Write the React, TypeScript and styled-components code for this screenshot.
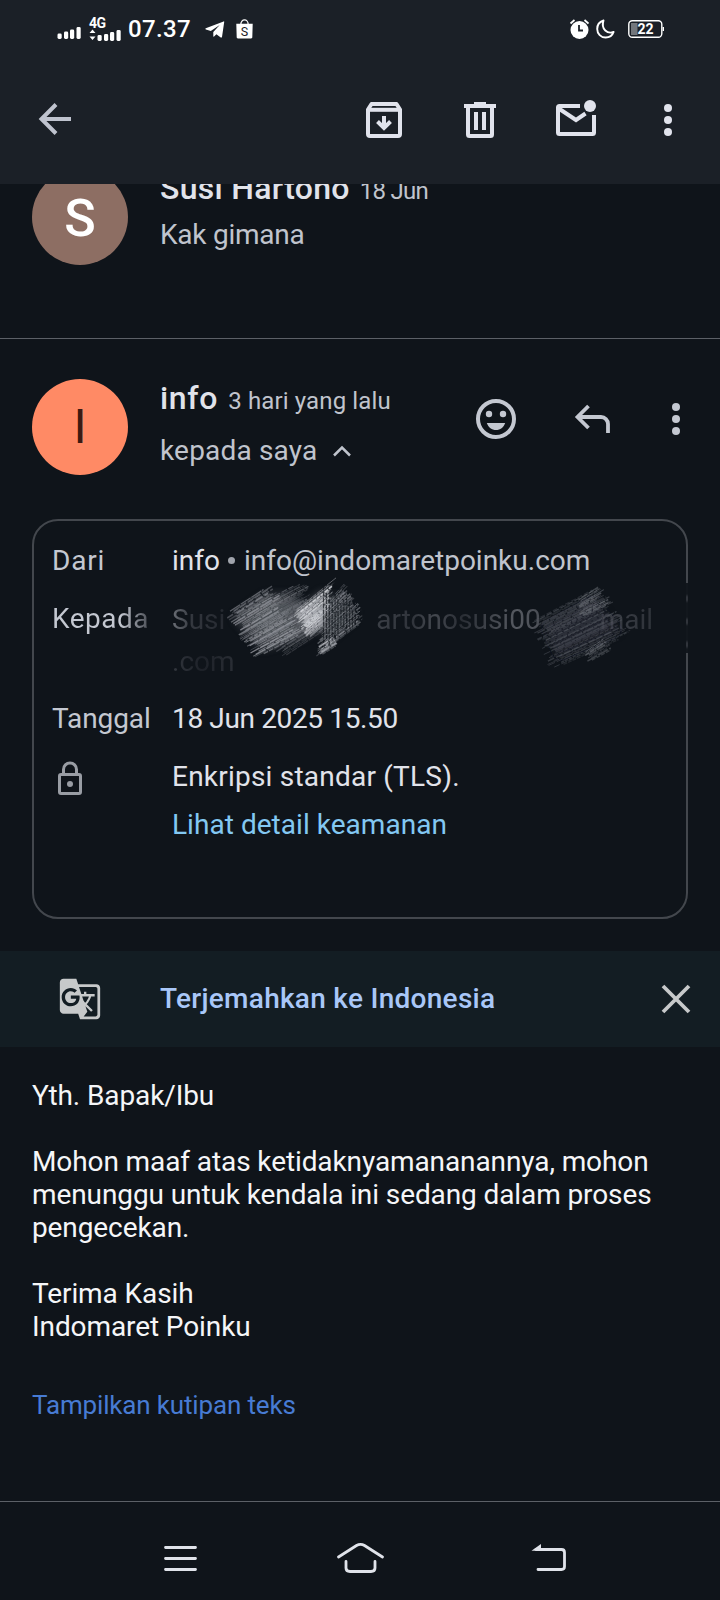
import React from 'react';
import styled, { createGlobalStyle } from 'styled-components';
import { MdGTranslate } from 'react-icons/md';

const GlobalStyle = createGlobalStyle`
  * { box-sizing: border-box; }
  body {
    margin: 0;
    background: #0f141a;
    font-family: Roboto, "Open Sans", sans-serif;
    color: #e3e5ec;
  }
  svg { display: block; flex: none; }
  button {
    border: 0;
    padding: 0;
    background: none;
    color: inherit;
    font: inherit;
  }
`;

const Screen = styled.div`
  width: 720px;
  height: 1600px;
  display: flex;
  flex-direction: column;
  overflow: hidden;
  background: #0f141a;
`;

const StatusBar = styled.div`
  height: 56px;
  flex: none;
  display: flex;
  align-items: flex-start;
  justify-content: space-between;
  padding: 17px 56px 0 57px;
  background: #1b2027;
  color: #ffffff;
`;

const StatusGroup = styled.div<{ $gap: number }>`
  display: flex;
  align-items: center;
  gap: ${(p) => p.$gap}px;
  height: 24px;
`;

const Signal = styled.div`
  display: flex;
  align-items: flex-start;
  gap: 8px;
`;

const Clock = styled.span`
  font-size: 24px;
  font-weight: 500;
  letter-spacing: 0.35px;
  line-height: 24px;
  margin: 0 4px 0 -4px;
`;

const Toolbar = styled.header`
  height: 128px;
  flex: none;
  display: flex;
  align-items: center;
  padding: 0 28px 0 31px;
  background: #1b2027;
  color: #e1e3ec;
`;

const IconButton = styled.button<{ $ml?: number; $color?: string }>`
  width: 48px;
  height: 48px;
  flex: none;
  margin-left: ${(p) => p.$ml ?? 0}px;
  color: ${(p) => p.$color ?? 'inherit'};
`;

const Spacer = styled.div`
  flex: 1;
`;

const CollapsedMessage = styled.article`
  height: 155px;
  flex: none;
  display: flex;
  align-items: flex-end;
  gap: 32px;
  padding: 0 32px 73px;
  overflow: hidden;
  border-bottom: 1px solid #5c6067;
`;

const OpenMessage = styled.article`
  height: 136px;
  flex: none;
  display: flex;
  align-items: flex-start;
  padding: 40px 20px 0 32px;
`;

const Avatar = styled.div<{ $bg: string; $fg: string; $size: number; $weight?: number; $drop?: number }>`
  width: 96px;
  height: 96px;
  flex: none;
  display: flex;
  align-items: center;
  justify-content: center;
  border-radius: 50%;
  background: ${(p) => p.$bg};
  color: ${(p) => p.$fg};
  font-size: ${(p) => p.$size}px;
  font-weight: ${(p) => p.$weight ?? 400};
  line-height: 92px;
  padding-top: ${(p) => p.$drop ?? 0}px;
`;

const Summary = styled.div<{ $gap: number; $ml?: number; $mb?: number }>`
  display: flex;
  flex-direction: column;
  gap: ${(p) => p.$gap}px;
  margin-left: ${(p) => p.$ml ?? 0}px;
  margin-bottom: ${(p) => p.$mb ?? 0}px;
`;

const NameLine = styled.div`
  display: flex;
  align-items: baseline;
  height: 40px;
  line-height: 38px;
  white-space: nowrap;
`;

const Name = styled.span<{ $spacing: number }>`
  font-size: 32px;
  font-weight: 500;
  letter-spacing: ${(p) => p.$spacing}px;
  color: #e1e3ea;
`;

const When = styled.span<{ $spacing: number }>`
  margin-left: 10px;
  font-size: 24px;
  letter-spacing: ${(p) => p.$spacing}px;
  color: #c0c4cd;
`;

const Snippet = styled.div<{ $spacing?: number }>`
  display: flex;
  align-items: center;
  gap: 16px;
  height: 40px;
  font-size: 28px;
  line-height: 40px;
  letter-spacing: ${(p) => p.$spacing ?? 0}px;
  color: #c0c4cd;
`;

const Details = styled.section`
  position: relative;
  width: 656px;
  height: 400px;
  flex: none;
  display: grid;
  grid-template-columns: 120px 1fr;
  align-content: start;
  row-gap: 18px;
  margin: 44px 0 0 32px;
  padding: 20px 18px;
  border: 2px solid #43474d;
  border-radius: 26px;
  font-size: 28px;
  line-height: 40px;
`;

const Label = styled.div<{ $spacing?: number; $fade?: boolean }>`
  justify-self: start;
  letter-spacing: ${(p) => p.$spacing ?? 0}px;
  white-space: nowrap;
  color: ${(p) => (p.$fade ? 'transparent' : '#c4c8d1')};
  background: ${(p) =>
    p.$fade ? 'linear-gradient(90deg, #c4c8d1 70%, #7d8189 88%, #4a4e55)' : 'none'};
  background-clip: text;
  -webkit-background-clip: text;
`;

const Value = styled.div<{ $spacing?: number }>`
  letter-spacing: ${(p) => p.$spacing ?? 0}px;
  white-space: nowrap;
  color: #e1e3ea;
`;

const Muted = styled.span`
  color: #c0c4cd;
`;

const Bullet = styled.span`
  display: inline-block;
  width: 7px;
  height: 7px;
  margin: 0 9px 6px 8px;
  border-radius: 50%;
  background: #a0a4ac;
`;

const fadedInk = `
  color: transparent;
  background-clip: text;
  -webkit-background-clip: text;
`;

const Recipient = styled.div`
  height: 82px;
  line-height: 42px;
  white-space: nowrap;
`;

const RecipientLine = styled.div`
  background-image: linear-gradient(
    90deg,
    #6b6f76 0,
    #33373e 20px,
    #262a31 50px,
    #22262d 190px,
    #3b3f46 205px,
    #30343b 240px,
    #454950 262px,
    #2a2e35 290px,
    #565a61 345px,
    #4a4e55 365px,
    #22262d 400px,
    #3b3f46 440px,
    #2e3239 480px
  );
  ${fadedInk}
`;

const DomainLine = styled.div`
  background-image: linear-gradient(90deg, #33373e 0, #1d2128 30px, #2a2e35 62px);
  ${fadedInk}
`;

const Tail = styled.span<{ $ml: number }>`
  margin-left: ${(p) => p.$ml}px;
`;

const SecurityLink = styled.a`
  display: block;
  margin-top: 8px;
  letter-spacing: 0.04px;
  color: #83c8f2;
`;

const LockCell = styled.div`
  padding: 4px 0 0 1px;
  color: #999da4;
`;

const Scribble = styled.svg`
  position: absolute;
  left: 166px;
  top: 44px;
`;

const WornEdge = styled.span`
  position: absolute;
  right: -2px;
  top: 62px;
  width: 2px;
  height: 70px;
  background: repeating-linear-gradient(
    180deg,
    #12171d 0 11px,
    #30343b 14px 17px,
    #12171d 20px 23px
  );
`;

const TranslateBar = styled.div`
  height: 96px;
  flex: none;
  display: flex;
  align-items: center;
  margin-top: 32px;
  padding: 0 20px 0 58px;
  background: #131d23;
  color: #c7c9ca;
`;

const TranslateAction = styled.button`
  margin: 0 auto 0 58px;
  font-size: 28px;
  font-weight: 500;
  line-height: 40px;
  letter-spacing: 0.28px;
  color: #a9c7f8;
`;

const Body = styled.div`
  margin: 32px 32px 0;
  font-size: 28px;
  line-height: 33px;
  letter-spacing: -0.1px;
  color: #f5f6f8;
`;

const Paragraph = styled.p`
  margin: 0 0 33px;
`;

const QuoteToggle = styled.a`
  margin: 11px 32px 0;
  font-size: 26px;
  line-height: 36px;
  letter-spacing: -0.16px;
  color: #477bd3;
`;

const Navigation = styled.nav`
  height: 99px;
  flex: none;
  display: flex;
  align-items: center;
  margin-top: auto;
  padding: 14px 0 0 160px;
  border-top: 1px solid #5c6067;
  color: #e0e3ea;
`;

const NavButton = styled.button<{ $ml?: number }>`
  margin-left: ${(p) => p.$ml ?? 0}px;
`;

const SingleBars = styled.div`
  padding-top: 9px;
`;

const MobileData = styled.div`
  display: flex;
  flex-direction: column;
  width: 33px;
  height: 24px;
`;

const Generation = styled.span`
  height: 9px;
  font-size: 14px;
  font-weight: 700;
  line-height: 13px;
  letter-spacing: -0.6px;
`;

const DataRow = styled.div`
  display: flex;
  gap: 1px;
  align-items: flex-end;
`;

const SignalBars = ({ short }: { short?: boolean }) => (
  <svg width="24" height="13" viewBox="0 0 24 13" fill="currentColor">
    <rect x="0.5" y={short ? 7 : 7.5} width="4.2" height={short ? 6 : 5.5} rx="1.4" />
    <rect x="7" y={short ? 6 : 5.5} width="4.2" height={short ? 7 : 7.5} rx="1.4" />
    <rect x="13" y={short ? 4 : 3.5} width="4.2" height={short ? 9 : 9.5} rx="1.4" />
    <rect x="19.500" y={short ? 2 : 1} width="4.2" height={short ? 11 : 12} rx="1.4" />
  </svg>
);

const MoreIcon = () => (
  <svg width="48" height="48" viewBox="0 0 48 48" fill="currentColor">
    <circle cx="24" cy="12" r="4" />
    <circle cx="24" cy="24" r="4" />
    <circle cx="24" cy="36" r="4" />
  </svg>
);

/* Deterministic noise so the pencil strokes land in the same spots on every render. */
const noise = (seed: number) => {
  let s = seed;
  return () => {
    s = (s * 16807) % 2147483647;
    return s / 2147483647;
  };
};

type Point = [number, number];
interface Patch {
  from: [Point, Point];
  to: [Point, Point];
  count: number;
  color: string;
  alpha: number;
}

const patches: Patch[] = [
  { from: [[24, 50], [54, 95]], to: [[72, 19], [108, 66]], count: 44, color: '#a9abb2', alpha: 0.72 },
  { from: [[46, 46], [78, 96]], to: [[105, 15], [130, 62]], count: 40, color: '#8a8d94', alpha: 0.55 },
  { from: [[90, 50], [108, 74]], to: [[137, 12], [126, 58]], count: 36, color: '#dcdee3', alpha: 0.85 },
  { from: [[118, 48], [116, 92]], to: [[146, 17], [168, 54]], count: 38, color: '#9a9da4', alpha: 0.7 },
  { from: [[116, 84], [120, 91]], to: [[134, 72], [138, 80]], count: 8, color: '#c4c6cc', alpha: 0.8 },
  { from: [[330, 58], [350, 106]], to: [[398, 22], [434, 68]], count: 50, color: '#5b5f67', alpha: 0.62 },
  { from: [[374, 38], [380, 54]], to: [[401, 20], [414, 38]], count: 14, color: '#7b7f86', alpha: 0.6 },
  { from: [[384, 88], [388, 98]], to: [[406, 72], [414, 84]], count: 10, color: '#73777e', alpha: 0.6 },
];

const strokes = patches.flatMap((patch, p) => {
  const rand = noise(917 + p * 331);
  const mix = (a: number, b: number, t: number) => a + (b - a) * t;
  return Array.from({ length: patch.count }, (_, i) => {
    const t = (i + rand() * 0.6) / patch.count;
    const inset = rand() * 0.2;
    const outset = 1 - rand() * 0.2;
    const fx = mix(patch.from[0][0], patch.from[1][0], t);
    const fy = mix(patch.from[0][1], patch.from[1][1], t);
    const tx = mix(patch.to[0][0], patch.to[1][0], t);
    const ty = mix(patch.to[0][1], patch.to[1][1], t);
    const a = [mix(fx, tx, inset), mix(fy, ty, inset)];
    const b = [mix(fx, tx, outset), mix(fy, ty, outset)];
    return {
      d: `M${a[0].toFixed(1)} ${a[1].toFixed(1)}L${b[0].toFixed(1)} ${b[1].toFixed(1)}`,
      color: patch.color,
      width: 0.7 + rand() * 0.9,
      opacity: patch.alpha * (0.35 + rand() * 0.65),
      dash: `${(3 + rand() * 12).toFixed(0)} ${(0.5 + rand() * 1.5).toFixed(1)}`,
    };
  });
});

const grain = (() => {
  const rand = noise(4421);
  return Array.from({ length: 15 }, (_, i) => {
    const x = 123.5 + i * 2.9;
    const reach = 32 - i * 1.7;
    return `M${x.toFixed(1)} ${(52 - reach + rand() * 12).toFixed(1)}V${(52 + reach - rand() * 12).toFixed(1)}`;
  });
})();

const PencilMarks = () => (
  <Scribble width="460" height="115" viewBox="0 0 460 115" fill="none">
    <defs>
      <filter id="smear" x="-20%" y="-20%" width="140%" height="140%">
        <feGaussianBlur stdDeviation="4" />
      </filter>
    </defs>
    <g filter="url(#smear)">
      <path d="M34 52 66 30 92 30 120 56 104 72 62 84z" fill="#74777e" opacity="0.55" />
      <path d="M98 48 124 26 122 62 112 66z" fill="#b2b4ba" opacity="0.6" />
      <path d="M124 30 138 30 154 54 124 78z" fill="#3c4047" opacity="0.5" />
      <path d="M344 62 394 34 420 66 358 92z" fill="#2a2e35" opacity="0.5" />
    </g>
    {strokes.map((s, i) => (
      <path
        key={i}
        d={s.d}
        stroke={s.color}
        strokeWidth={s.width}
        opacity={s.opacity}
        strokeDasharray={s.dash}
      />
    ))}
    {grain.map((d) => (
      <path key={d} d={d} stroke="#0f141a" strokeWidth="1.200" strokeDasharray="5 1" opacity="0.7" />
    ))}
  </Scribble>
);

export default function App() {
  return (
    <>
      <GlobalStyle />
      <Screen>
        <StatusBar>
          <StatusGroup $gap={10}>
            <Signal>
              <SingleBars>
                <SignalBars />
              </SingleBars>
              <MobileData>
                <Generation>4G</Generation>
                <DataRow>
                  <svg width="7" height="15" viewBox="0 0 7 15" fill="currentColor">
                    <path d="M3.500 3.500 6.500 7h-6zM3.500 14 .5 10.500h6z" />
                  </svg>
                  <SignalBars short />
                </DataRow>
              </MobileData>
            </Signal>
            <Clock>07.37</Clock>
            <svg width="20" height="17" viewBox="0 0 20 17" fill="currentColor">
              <path d="M18.600.4.800 7.300c-.6.3-.5.9.1 1.100L5.800 9.900 14.700 4 8.300 10.900v4.300c0 .5.5.6.8.3l2.300-2.300 4.300 3.200c.6.3 1.200.1 1.300-.5L19.200 1c.1-.5-.2-.8-.6-.6z" />
            </svg>
            <svg width="19" height="20" viewBox="-1 0 19 20" fill="none">
              <path d="M4.800 5.500C4.800-.6 12.200-.6 12.200 5.500" stroke="currentColor" strokeWidth="1.300" />
              <path d="M.3 4.800h16.400L16.300 18.300c0 .7-.5 1.200-1.200 1.200H1.900c-.7 0-1.200-.5-1.200-1.200z" fill="currentColor" />
              <text x="8.500" y="16.500" textAnchor="middle" fontSize="12.500" fill="#1b2027">
                S
              </text>
            </svg>
          </StatusGroup>
          <StatusGroup $gap={7}>
            <svg width="20" height="20" viewBox="0 0 20 20" fill="none">
              <circle cx="10.500" cy="11" r="9" fill="currentColor" />
              <path d="M1.500 4.500 5.500 1M15.500 1l4 3.500" stroke="currentColor" strokeWidth="1.800" />
              <path d="M10 6v5.500h4" stroke="#1b2027" strokeWidth="1.800" />
            </svg>
            <svg width="19" height="20" viewBox="0 0 19 20" fill="none">
              <path
                d="M7.500 1.500C4 2.600 1.200 5.800 1.200 10c0 4.800 3.800 8.500 8.400 8.500 4 0 6.900-2.400 8-5.600-5.800 2.500-13-2.400-10.100-11.400z"
                stroke="currentColor"
                strokeWidth="1.900"
                strokeLinejoin="round"
              />
            </svg>
            <svg width="42" height="20" viewBox="0 0 42 20" fill="none">
              <rect x="6.800" y="1.800" width="33" height="16.500" rx="3.500" stroke="currentColor" strokeWidth="1.400" />
              <rect x="9" y="4" width="6.500" height="12" fill="#73777c" />
              <path d="M40.600 8h1.400v4h-1.400z" fill="currentColor" />
              <text x="23.500" y="15" textAnchor="middle" fontSize="14" fontWeight="700" fill="currentColor">
                22
              </text>
            </svg>
          </StatusGroup>
        </StatusBar>

        <Toolbar>
          <IconButton aria-label="Kembali" $color="#bfc3ce">
            <svg width="48" height="48" viewBox="0 0 48 48" fill="none" stroke="currentColor" strokeWidth="4">
              <path d="M40 23H11M25 8.500 10.500 23 25 37.500" />
            </svg>
          </IconButton>
          <Spacer />
          <IconButton aria-label="Arsipkan">
            <svg width="48" height="48" viewBox="0 0 48 48" fill="none" stroke="currentColor" strokeWidth="4">
              <path d="M8 13.500 11.500 8h25L40 13.500V38a2 2 0 0 1-2 2H10a2 2 0 0 1-2-2z" strokeLinejoin="round" />
              <path d="M8 13.800h32" />
              <path d="M24 20v12M17.500 25.500 24 32l6.500-6.500" />
            </svg>
          </IconButton>
          <IconButton aria-label="Hapus" $ml={48}>
            <svg width="48" height="48" viewBox="0 0 48 48" fill="none" stroke="currentColor" strokeWidth="4">
              <path d="M8 10h32M18 8h12" />
              <path d="M12 11v27.500A1.500 1.500 0 0 0 13.500 40h21a1.500 1.500 0 0 0 1.500-1.500V11M22 16v18M30 16v18" transform="translate(0 0)" stroke="none" />
              <path d="M12 11v27.500A1.500 1.500 0 0 0 13.500 40h21a1.500 1.500 0 0 0 1.500-1.500V11M20 16v18M28 16v18" />
            </svg>
          </IconButton>
          <IconButton aria-label="Tandai belum dibaca" $ml={48}>
            <svg width="48" height="48" viewBox="0 0 48 48" fill="none" stroke="currentColor" strokeWidth="4">
              <path d="M28 10H7.500A1.500 1.500 0 0 0 6 11.500v25A1.500 1.500 0 0 0 7.500 38h33a1.500 1.500 0 0 0 1.500-1.500V19" />
              <path d="m6 12 18 12 9.500-6.500" />
              <circle cx="38" cy="10" r="6" fill="currentColor" stroke="none" />
            </svg>
          </IconButton>
          <IconButton aria-label="Opsi lainnya" $ml={44}>
            <MoreIcon />
          </IconButton>
        </Toolbar>

        <CollapsedMessage>
          <Avatar $bg="#8d6e63" $fg="#ffffff" $size={52} $weight={500} $drop={3}>S</Avatar>
          <Summary $gap={6} $mb={10}>
            <NameLine>
              <Name $spacing={0.3}>Susi Hartono</Name>
              <When $spacing={-0.75}>18 Jun</When>
            </NameLine>
            <Snippet $spacing={-0.25}>Kak gimana</Snippet>
          </Summary>
        </CollapsedMessage>

        <OpenMessage>
          <Avatar $bg="#ff8a65" $fg="#3b1a12" $size={48}>I</Avatar>
          <Summary $gap={12} $ml={32}>
            <NameLine>
              <Name $spacing={0.7}>info</Name>
              <When $spacing={0.13}>3 hari yang lalu</When>
            </NameLine>
            <Snippet $spacing={0.18}>
              kepada saya
              <svg width="18" height="12" viewBox="0 0 18 12" fill="none" stroke="currentColor" strokeWidth="2.500">
                <path d="M1 10.500 9 2.500l8 8" />
              </svg>
            </Snippet>
          </Summary>
          <Spacer />
          <IconButton aria-label="Tambahkan reaksi" $color="#c4c8d1">
            <svg width="48" height="80" viewBox="0 0 24 40" fill="none">
              <circle cx="12" cy="20" r="9" stroke="currentColor" strokeWidth="2" />
              <circle cx="8.500" cy="17.500" r="1.600" fill="currentColor" />
              <circle cx="15.500" cy="17.500" r="1.600" fill="currentColor" />
              <path d="M7.400 22h9.200c-.8 2.200-2.500 3.500-4.600 3.500S8.200 24.200 7.400 22z" fill="currentColor" />
            </svg>
          </IconButton>
          <IconButton aria-label="Balas" $ml={48} $color="#c4c8d1">
            <svg width="48" height="80" viewBox="0 0 48 80" fill="none" stroke="currentColor" strokeWidth="3.800">
              <path d="M20.500 27 9.500 38l11 11M10 38h23a7 7 0 0 1 7 7v9" />
            </svg>
          </IconButton>
          <IconButton aria-label="Opsi pesan" $ml={36} $color="#c4c8d1">
            <svg width="48" height="80" viewBox="0 0 48 80" fill="currentColor">
              <circle cx="24" cy="28" r="4" />
              <circle cx="24" cy="40" r="4" />
              <circle cx="24" cy="52" r="4" />
            </svg>
          </IconButton>
        </OpenMessage>

        <Details>
          <Label $spacing={0.8}>Dari</Label>
          <Value>
            info
            <Bullet />
            <Muted>info@indomaretpoinku.com</Muted>
          </Value>

          <Label $spacing={0.5} $fade>Kepada</Label>
          <Recipient>
            <RecipientLine>
              Susi<Tail $ml={151}>artonosusi00</Tail>
              <Tail $ml={59}>mail</Tail>
            </RecipientLine>
            <DomainLine>.com</DomainLine>
          </Recipient>

          <Label $spacing={-0.09}>Tanggal</Label>
          <Value $spacing={-0.36}>18 Jun 2025 15.50</Value>

          <LockCell>
            <svg width="32" height="36" viewBox="0 0 32 36" fill="none" stroke="currentColor" strokeWidth="3">
              <rect x="6.500" y="13.500" width="21" height="19" rx="1.500" />
              <path d="M10.500 13V8.500a6.500 6.500 0 0 1 13 0V13" />
              <circle cx="17" cy="23" r="3" fill="currentColor" stroke="none" />
            </svg>
          </LockCell>
          <Value $spacing={0.22}>
            Enkripsi standar (TLS).
            <SecurityLink>Lihat detail keamanan</SecurityLink>
          </Value>

          <PencilMarks />
          <WornEdge />
        </Details>

        <TranslateBar>
          <MdGTranslate size={44} />
          <TranslateAction>Terjemahkan ke Indonesia</TranslateAction>
          <IconButton aria-label="Tutup">
            <svg width="48" height="48" viewBox="0 0 48 48" fill="none" stroke="currentColor" strokeWidth="3.800">
              <path d="M11 11l26 26M37 11 11 37" />
            </svg>
          </IconButton>
        </TranslateBar>

        <Body>
          <Paragraph>Yth. Bapak/Ibu</Paragraph>
          <Paragraph>
            Mohon maaf atas ketidaknyamananannya, mohon
            <br />
            menunggu untuk kendala ini sedang dalam proses
            <br />
            pengecekan.
          </Paragraph>
          <Paragraph>
            Terima Kasih
            <br />
            Indomaret Poinku
          </Paragraph>
        </Body>
        <QuoteToggle>Tampilkan kutipan teks</QuoteToggle>

        <Navigation>
          <NavButton aria-label="Aplikasi terbaru">
            <svg width="40" height="40" viewBox="0 0 40 40" fill="none" stroke="currentColor" strokeWidth="2.800" strokeLinecap="round">
              <path d="M5.500 9.500h30M5.500 20.500h30M5.500 31.500h30" />
            </svg>
          </NavButton>
          <NavButton aria-label="Beranda" $ml={135}>
            <svg width="50" height="40" viewBox="0 0 50 40" fill="none" stroke="currentColor" strokeWidth="2.800" strokeLinecap="round">
              <path d="M3.500 19 21.500 7.500q4-2.400 8 0L47.500 19M11 23.500V30q0 3.500 4 3.500h21q4 0 4-3.500v-6.500" />
            </svg>
          </NavButton>
          <NavButton aria-label="Kembali" $ml={145}>
            <svg width="40" height="40" viewBox="0 0 40 40" fill="none" stroke="currentColor" strokeWidth="2.800" strokeLinecap="round">
              <path d="M6 11.500h25.500q3 0 3 3v14q0 3-3 3H8" />
              <path d="M1.500 12.800 11 6v6.800z" fill="currentColor" stroke="none" />
            </svg>
          </NavButton>
        </Navigation>
      </Screen>
    </>
  );
}
